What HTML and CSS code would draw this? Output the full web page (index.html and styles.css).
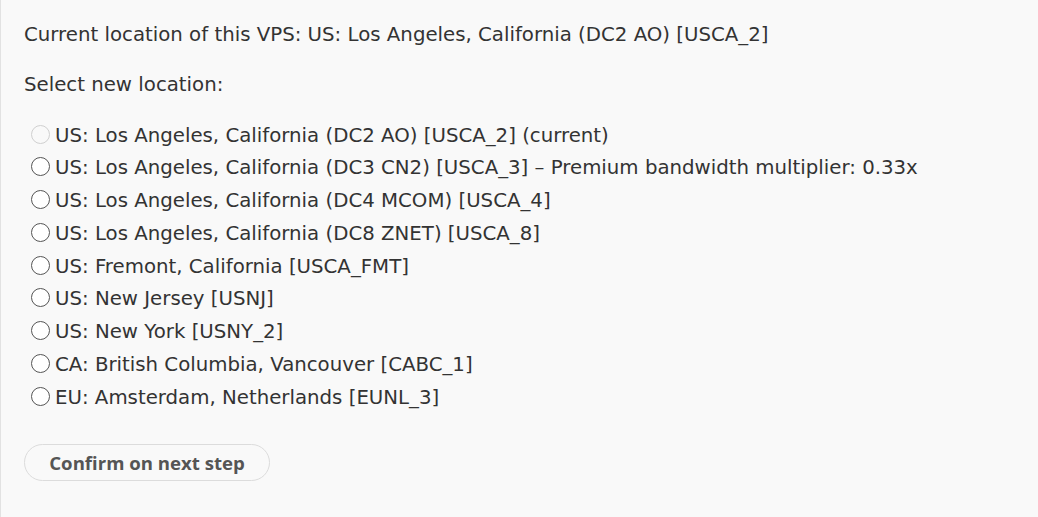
FILE: index.html
```html
<!DOCTYPE html>
<html>
<head>
<meta charset="utf-8">
<link rel="stylesheet" href="styles.css">
</head>
<body>
<div class="page">
  <p class="current">Current location of this VPS: US: Los Angeles, California (DC2 AO) [USCA_2]</p>
  <p class="select">Select new location:</p>
  <ul class="locations">
    <li><label><input type="radio" name="loc" disabled><span>US: Los Angeles, California (DC2 AO) [USCA_2] (current)</span></label></li>
    <li><label><input type="radio" name="loc"><span>US: Los Angeles, California (DC3 CN2) [USCA_3] – Premium bandwidth multiplier: 0.33x</span></label></li>
    <li><label><input type="radio" name="loc"><span>US: Los Angeles, California (DC4 MCOM) [USCA_4]</span></label></li>
    <li><label><input type="radio" name="loc"><span>US: Los Angeles, California (DC8 ZNET) [USCA_8]</span></label></li>
    <li><label><input type="radio" name="loc"><span>US: Fremont, California [USCA_FMT]</span></label></li>
    <li><label><input type="radio" name="loc"><span>US: New Jersey [USNJ]</span></label></li>
    <li><label><input type="radio" name="loc"><span>US: New York [USNY_2]</span></label></li>
    <li><label><input type="radio" name="loc"><span>CA: British Columbia, Vancouver [CABC_1]</span></label></li>
    <li><label><input type="radio" name="loc"><span>EU: Amsterdam, Netherlands [EUNL_3]</span></label></li>
  </ul>
  <button class="confirm" type="button">Confirm on next step</button>
</div>
</body>
</html>
```

FILE: styles.css
```css
html, body {
  margin: 0;
  padding: 0;
  height: 100%;
}
body {
  background: #f9f9f9;
  font-family: "DejaVu Sans", Verdana, sans-serif;
  color: #333;
  font-size: 19.75px;
}
.page {
  min-height: 100%;
  box-sizing: border-box;
  border-left: 1px solid #e2e2e2;
  padding: 23px 0 0 23px;
}
.current, .select {
  margin: 0;
  line-height: 24px;
}
.select {
  margin-top: 26px;
}
.locations {
  list-style: none;
  margin: 26.5px 0 0 0;
  padding: 0;
}
.locations li {
  height: 24px;
  margin-bottom: 8.75px;
}
.locations label {
  display: flex;
  align-items: center;
  gap: 5px;
  line-height: 24px;
}
.locations input {
  appearance: none;
  -webkit-appearance: none;
  box-sizing: border-box;
  width: 19px;
  height: 19px;
  margin: 0 0 3px 7px;
  border: 1.3px solid #555;
  border-radius: 50%;
  background: #fff;
  flex: none;
}
.locations input:disabled {
  border-color: #d0d0d0;
  background: #f9f9f9;
}
.confirm {
  margin-top: 26px;
  width: 246px;
  height: 37px;
  border: 1px solid #dcdcdc;
  border-radius: 19px;
  background: #f9f9f9;
  color: #555;
  font-family: "Open Sans", sans-serif;
  font-weight: 700;
  font-size: 18.6px;
  padding: 0;
}
```
